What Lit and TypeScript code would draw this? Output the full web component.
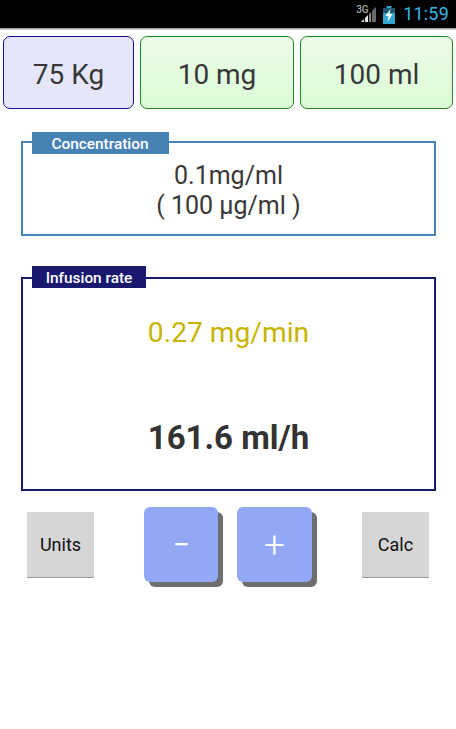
import { LitElement, html, css } from "lit";
import { customElement } from "lit/decorators.js";

@customElement("app-root")
export class AppRoot extends LitElement {
  static styles = css`
    :host { display: block; width: 456px; height: 729px; background: #fff; font-family: Roboto, "Liberation Sans", sans-serif; overflow: hidden; }
    .status { height: 28px; background: #000; display: flex; align-items: center; justify-content: flex-end; padding-right: 7px; box-sizing: border-box; }
    .time { color: #33b5e5; font-size: 18px; letter-spacing: 0.2px; line-height: 28px; margin-left: 8px; }
    .net { position: relative; width: 20px; height: 18px; margin: 0 7px 0 0; }
    .net svg, .batt { display: block; }
    .g3 { position: absolute; left: 0; top: 0; color: #a8a8a8; font-size: 10px; font-weight: 500; line-height: 10px; }
    .batt { margin-top: 1px; }
    .shade { height: 2px; background: linear-gradient(#8a8a8a, #e4e4e4); }
    .top { display: flex; padding: 6px 3px 0 3px; height: 73px; gap: 6px; }
    .tb { box-sizing: border-box; height: 73px; border-radius: 7px; display: flex; align-items: center; justify-content: center; font-size: 28px; color: #383838; padding-top: 3px; }
    .w { width: 131px; border: 1px solid #14108a; background: #e6e6fa; }
    .g { width: 154px; border: 1px solid #1f8a1f; background: linear-gradient(#ecfbe8, #dcfbd6); }
    .g.l { width: 153px; }
    .panel { position: relative; box-sizing: border-box; margin-left: 21px; width: 415px; border-style: solid; border-width: 2px; display: flex; flex-direction: column; align-items: center; }
    .conc { margin-top: 32px; height: 95px; border-color: #4682b4; font-size: 25px; color: #383838; line-height: 30px; padding-top: 18px; }
    .inf { margin-top: 41px; height: 214px; border-color: #191970; }
    .tag { position: absolute; left: 9px; color: #fff; font-weight: 500; font-size: 15.4px; display: flex; align-items: center; justify-content: center; height: 22px; padding-top: 2px; box-sizing: border-box; }
    .conc .tag { top: -11px; width: 137px; background: #4682b4; padding-right: 1px; }
    .inf .tag { top: -13px; width: 114px; background: #191970; }
    .mg { color: #c8b400; font-size: 28.2px; line-height: 34px; margin-top: 37px; }
    .ml { color: #333; font-size: 33px; font-weight: 700; line-height: 40px; margin-top: 68px; }
    .bottom { display: flex; align-items: flex-start; margin-top: 16px; padding-left: 27px; }
    .grey { box-sizing: border-box; width: 67px; height: 66px; margin-top: 5px; background: #d6d6d6; border-bottom: 1px solid #a0a0a0; font-size: 18px; color: #111; display: flex; align-items: center; justify-content: center; }
    .blue { width: 74px; height: 75px; border-radius: 6px; background: #93a8f4; box-shadow: 5px 5px 0 #6e6e6e; color: #fff; display: flex; align-items: center; justify-content: center; }
    .minus { margin-left: 50px; font-size: 30px; }
    .plus { margin-left: 19px; width: 75px; font-size: 37px; font-weight: 300; }
    .calc { margin-left: 50px; }
  `;

  render() {
    return html`
      <div class="status">
        <div class="net">
          <span class="g3">3G</span>
          <svg width="20" height="18" viewBox="0 0 20 18">
            <path d="M5 17 8 14v3z" fill="#e8e8e8"/>
            <path d="M9 17v-4l3-3v7z" fill="#e8e8e8"/>
            <path d="M13 17V9l2-2v10z" fill="#8a8a8a"/>
            <path d="M16 17V6l4-4v15z" fill="#6a6a6a"/>
          </svg>
        </div>
        <svg class="batt" width="12" height="18" viewBox="0 0 12 18">
          <path d="M3.5 0h5v2H12v16H0V2h3.500z" fill="#33a5d0"/>
          <path d="M0 2h12v5H0z" fill="#1d5a72"/>
          <path d="M7.500 3 2.500 10h3L4.500 16l5-8h-3z" fill="#fff"/>
        </svg>
        <span class="time">11:59</span>
      </div>
      <div class="shade"></div>
      <div class="top">
        <div class="tb w">75 Kg</div>
        <div class="tb g">10 mg</div>
        <div class="tb g l">100 ml</div>
      </div>
      <div class="panel conc">
        <div class="tag">Concentration</div>
        <div>0.1mg/ml</div>
        <div>( 100 µg/ml )</div>
      </div>
      <div class="panel inf">
        <div class="tag">Infusion rate</div>
        <div class="mg">0.27 mg/min</div>
        <div class="ml">161.6 ml/h</div>
      </div>
      <div class="bottom">
        <div class="grey">Units</div>
        <div class="blue minus">−</div>
        <div class="blue plus">+</div>
        <div class="grey calc">Calc</div>
      </div>
    `;
  }
}
